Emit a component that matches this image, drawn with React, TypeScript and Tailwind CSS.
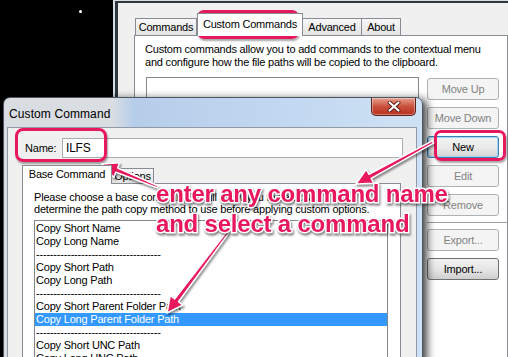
import React from "react";

const PINK = "#e8185d";

type Pt = [number, number];

function arrowPoints(tail: Pt, tip: Pt, shaft = 2.4, headLen = 16, headW = 8): string {
  const dx = tip[0] - tail[0];
  const dy = tip[1] - tail[1];
  const len = Math.hypot(dx, dy);
  const ux = dx / len;
  const uy = dy / len;
  const nx = -uy;
  const ny = ux;
  const bx = tip[0] - ux * headLen;
  const by = tip[1] - uy * headLen;
  const pts: Pt[] = [
    [tail[0] + nx * 1.2, tail[1] + ny * 1.2],
    [bx + nx * shaft, by + ny * shaft],
    [bx + nx * headW, by + ny * headW],
    tip,
    [bx - nx * headW, by - ny * headW],
    [bx - nx * shaft, by - ny * shaft],
    [tail[0] - nx * 1.2, tail[1] - ny * 1.2],
  ];
  return pts.map((p) => `${p[0].toFixed(1)},${p[1].toFixed(1)}`).join(" ");
}

const dashes = "-".repeat(36);

const items = [
  "Copy Short Name",
  "Copy Long Name",
  dashes,
  "Copy Short Path",
  "Copy Long Path",
  dashes,
  "Copy Short Parent Folder Path",
  "Copy Long Parent Folder Path",
  dashes,
  "Copy Short UNC Path",
  "Copy Long UNC Path",
];

type BtnKind = "disabled" | "focus" | "normal";

const SideButton: React.FC<{ label: string; kind: BtnKind }> = ({ label, kind }) => {
  const look =
    kind === "disabled"
      ? "border-[#adb2b5] bg-[#f4f4f4] text-[#838383]"
      : kind === "focus"
      ? "border-[#3c7fb1] bg-gradient-to-b from-[#f2f2f2] via-[#ebebeb] to-[#d4d4d4] text-black shadow-[inset_0_0_0_1px_#9fd5f5]"
      : "border-[#707070] bg-gradient-to-b from-[#f2f2f2] via-[#e6e6e6] to-[#cfcfcf] text-black";
  return (
    <div className={`flex h-[22px] w-[72px] items-center justify-center rounded-[3px] border ${look}`}>
      {label}
    </div>
  );
};

const BackWindow: React.FC = () => (
  <div className="absolute left-[113px] top-0 right-0 bottom-0 bg-[#d5dde6] pl-[2px] pt-[1px]">
    <div className="h-full border-l-[3px] border-t-2 border-[#30363c] bg-[#f0f0f0]">
      <div className="pl-[16px] pt-[10px]">
        <div className="flex h-[22px] items-end pl-[1px]">
          <div className="flex h-[17px] w-[62px] items-center justify-center border border-b-0 border-[#898c95] bg-gradient-to-b from-[#f7f7f7] to-[#e3e3e3]">
            Commands
          </div>
          <div className="relative z-10 -mb-px flex h-[23px] w-[106px] items-center justify-center border border-b-0 border-[#898c95] bg-white pb-[2px]">
            Custom Commands
          </div>
          <div className="flex h-[17px] w-[59px] items-center justify-center border border-b-0 border-l-0 border-[#898c95] bg-gradient-to-b from-[#f7f7f7] to-[#e3e3e3]">
            Advanced
          </div>
          <div className="flex h-[17px] w-[39px] items-center justify-center border border-b-0 border-l-0 border-[#898c95] bg-gradient-to-b from-[#f7f7f7] to-[#e3e3e3]">
            About
          </div>
        </div>
        <div className="h-[330px] border border-[#898c95] bg-white pl-[10px] pt-[7px]">
          <p className="leading-[13px]">
            Custom commands allow you to add commands to the contextual menu
            <br />
            and configure how the file paths will be copied to the clipboard.
          </p>
          <div className="mt-[8px] flex">
            <div className="ml-[1px] h-[300px] w-[284px] border border-[#828790] bg-white" />
            <div className="ml-[8px] flex flex-col gap-[7px] pt-[1px]">
              <SideButton label="Move Up" kind="disabled" />
              <SideButton label="Move Down" kind="disabled" />
              <SideButton label="New" kind="focus" />
              <SideButton label="Edit" kind="disabled" />
              <SideButton label="Remove" kind="disabled" />
              <div className="-my-px h-px w-[80px] bg-[#a0a0a0]" />
              <SideButton label="Export..." kind="disabled" />
              <SideButton label="Import..." kind="normal" />
            </div>
          </div>
        </div>
      </div>
    </div>
  </div>
);

const Dialog: React.FC = () => (
  <div className="absolute left-[3px] top-[97px] h-[280px] w-[420px] rounded-t-[7px] border border-[#4d5661] bg-[linear-gradient(90deg,#d9dce0_0%,#dadde2_26%,#b6cdea_31%,#c3d9f1_70%,#cfe1f4_100%)] shadow-[4px_2px_8px_rgba(0,0,0,0.75)]">
    <div className="flex h-[29px] items-start">
      <span className="ml-[5px] mt-[7px] text-[12px] tracking-[0.1px] text-black">Custom Command</span>
      <div className="ml-auto mr-[6px] flex h-[18px] w-[45px] items-center justify-center rounded-b-[5px] border border-t-0 border-[#5e2219] bg-gradient-to-b from-[#e6a08f] via-[#c9503c] to-[#b8301d] shadow-[inset_0_0_0_1px_rgba(255,255,255,0.35)]">
        <svg width="14" height="11" viewBox="0 0 14 11">
          <path d="M2.5 1.5 L11.5 9.5 M11.5 1.5 L2.5 9.5" stroke="#5a1a12" strokeWidth="4" strokeLinecap="round" />
          <path d="M2.5 1.5 L11.5 9.5 M11.5 1.5 L2.5 9.5" stroke="#ffffff" strokeWidth="2.2" strokeLinecap="round" />
        </svg>
      </div>
    </div>
    <div className="ml-[3px] mr-[5px] h-[260px] border border-[#8f9aa6] bg-[#f0f0f0]">
      <div className="mt-[10px] flex items-center pl-[17px]">
        <span className="w-[37px]">Name:</span>
        <div className="flex h-[20px] w-[341px] items-center border border-[#abadb3] bg-white pl-[3px] text-[12px]">
          ILFS
        </div>
      </div>
      <div className="mt-[7px] pl-[14px]">
        <div className="flex h-[18px] items-end">
          <div className="relative z-10 -mb-px flex h-[19px] w-[90px] items-center justify-center border border-b-0 border-[#898c95] bg-white pb-[1px]">
            Base Command
          </div>
          <div className="flex h-[15px] w-[42px] items-center justify-center border border-b-0 border-l-0 border-[#898c95] bg-gradient-to-b from-[#f7f7f7] to-[#e3e3e3]">
            Options
          </div>
        </div>
        <div className="h-[200px] w-[379px] border border-[#898c95] bg-white pl-[11px] pt-[7px]">
          <p className="leading-[12px]">
            Please choose a base command. It will allow you to select a
            <br />
            determine the path copy method to use before applying custom options.
          </p>
          <div className="mt-[5px] h-[160px] w-[354px] border border-[#828790] bg-white pt-px">
            {items.map((t, i) => (
              <div
                key={i}
                className={`h-[13px] whitespace-nowrap pl-[1px] leading-[13px] ${
                  i === 7 ? "bg-[#3399ff] text-white" : "text-black"
                }`}
              >
                {t}
              </div>
            ))}
          </div>
        </div>
      </div>
    </div>
  </div>
);

const Annotations: React.FC = () => (
  <>
    <div className="absolute left-[197px] top-[10px] h-[29px] w-[102px] rounded-[7px] border-[3px] border-[#e8185d] shadow-[1px_2px_2px_rgba(0,0,0,0.35)]" />
    <div className="absolute left-[15px] top-[128px] h-[34px] w-[92px] rounded-[8px] border-[3px] border-[#e8185d] shadow-[1px_2px_2px_rgba(0,0,0,0.35)]" />
    <div className="absolute left-[434px] top-[130px] h-[31px] w-[72px] rounded-[7px] border-[3px] border-[#e8185d] shadow-[1px_2px_2px_rgba(0,0,0,0.35)]" />
    <svg
      className="absolute left-0 top-0 drop-shadow-[1px_2px_1px_rgba(0,0,0,0.45)]"
      width="508"
      height="357"
      viewBox="0 0 508 357"
    >
      <g fill={PINK} stroke="#ffffff" strokeWidth="1.6" strokeLinejoin="round">
        <polygon points={arrowPoints([158, 187], [102, 164])} />
        <polygon points={arrowPoints([433, 142], [356, 184])} />
        <polygon points={arrowPoints([228, 232], [167, 313])} />
      </g>
    </svg>
    <div className="absolute left-[156px] top-[179px] whitespace-nowrap text-[24px] font-bold leading-[30px] text-[#e8185d] drop-shadow-[1px_2px_1px_rgba(0,0,0,0.5)] [-webkit-text-stroke:3px_white] [paint-order:stroke_fill]">
      enter any command name
      <br />
      and select a command
    </div>
  </>
);

export default function App() {
  return (
    <div className="relative h-[357px] w-[508px] overflow-hidden bg-black font-['Liberation_Sans',Arial,sans-serif] text-[11px] tracking-[-0.2px] text-black">
      <div className="absolute left-[79px] top-[10px] h-[3px] w-[3px] rounded-full bg-white" />
      <BackWindow />
      <Dialog />
      <Annotations />
    </div>
  );
}
